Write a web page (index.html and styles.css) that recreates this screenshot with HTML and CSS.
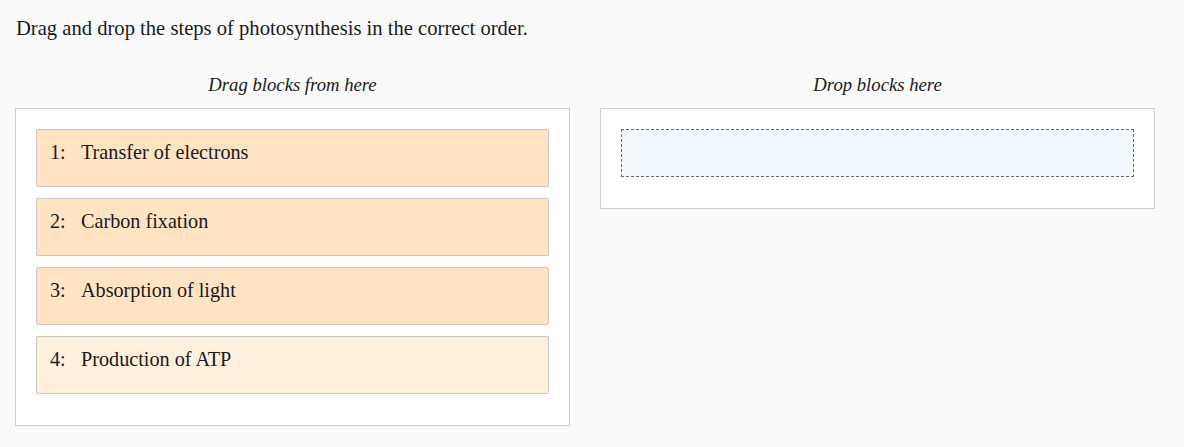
FILE: index.html
```html
<!DOCTYPE html>
<html>
<head>
<meta charset="utf-8">
<link rel="stylesheet" href="styles.css">
</head>
<body>
<div class="page">
  <p class="prompt">Drag and drop the steps of photosynthesis in the correct order.</p>
  <div class="columns">
    <div class="column">
      <div class="col-title">Drag blocks from here</div>
      <div class="box">
        <div class="block"><span class="num">1:</span><span>Transfer of electrons</span></div>
        <div class="block"><span class="num">2:</span><span>Carbon fixation</span></div>
        <div class="block"><span class="num">3:</span><span>Absorption of light</span></div>
        <div class="block faded"><span class="num">4:</span><span>Production of ATP</span></div>
      </div>
    </div>
    <div class="column">
      <div class="col-title">Drop blocks here</div>
      <div class="box">
        <div class="dropzone"></div>
      </div>
    </div>
  </div>
</div>
</body>
</html>
```
FILE: styles.css
```css
html, body {
  margin: 0;
  padding: 0;
  background: #fafafa;
}
body {
  font-family: "Liberation Serif", "DejaVu Serif", serif;
  color: #1a1a1a;
}
.page {
  padding: 14px 29px 0 15px;
}
.prompt {
  margin: 0 0 0 1px;
  font-size: 20.6px;
  line-height: 28px;
}
.columns {
  display: flex;
  gap: 30px;
  margin-top: 32px;
}
.column {
  flex: 1;
  display: flex;
  flex-direction: column;
}
.col-title {
  text-align: center;
  font-style: italic;
  font-size: 18.7px;
  line-height: 22px;
  margin-bottom: 12px;
}
.box {
  background: #fff;
  border: 1px solid #cbd1d8;
  padding: 20px 20px 20px 20px;
}
.block {
  background: #ffe4c4;
  border: 1px solid #c9c5c0;
  border-radius: 2px;
  height: 56px;
  box-sizing: content-box;
  margin-bottom: 11px;
  padding: 0 13px;
  font-size: 20.2px;
  line-height: 44px;
  display: flex;
}
.block.faded {
  background: #ffefdd;
}
.num {
  width: 31px;
}
.dropzone {
  background: #f0f8ff;
  border: 1px dashed #5f6a73;
  height: 46px;
  margin-bottom: 11px;
}
```
